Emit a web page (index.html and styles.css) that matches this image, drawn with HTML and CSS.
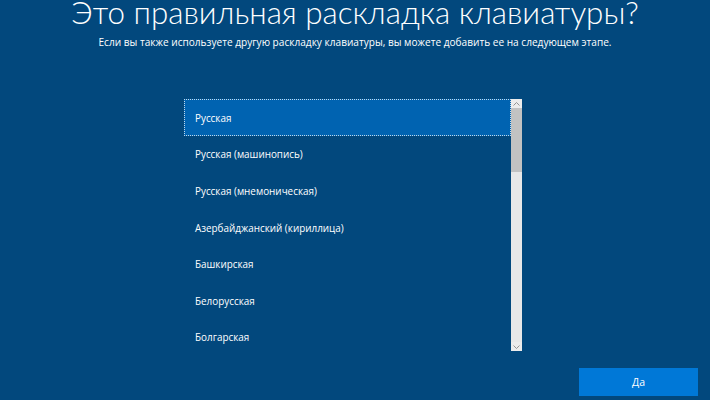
FILE: index.html
```html
<!DOCTYPE html>
<html lang="ru">
<head>
<meta charset="utf-8">
<link rel="stylesheet" href="styles.css">
</head>
<body>
<div class="page">
  <h1 class="title">Это правильная раскладка клавиатуры?</h1>
  <p class="subtitle">Если вы также используете другую раскладку клавиатуры, вы можете добавить ее на следующем этапе.</p>
  <div class="listbox">
    <ul class="items">
      <li class="item selected">Русская</li>
      <li class="item">Русская (машинопись)</li>
      <li class="item">Русская (мнемоническая)</li>
      <li class="item">Азербайджанский (кириллица)</li>
      <li class="item">Башкирская</li>
      <li class="item">Белорусская</li>
      <li class="item">Болгарская</li>
    </ul>
    <div class="scrollbar">
      <div class="arrow up"><svg width="7" height="4" viewBox="0 0 7 4"><path d="M0.5 3.5 L3.5 0.5 L6.5 3.5" fill="none" stroke="#8a8a8a" stroke-width="0.9"/></svg></div>
      <div class="track"><div class="thumb"></div></div>
      <div class="arrow down"><svg width="7" height="4" viewBox="0 0 7 4"><path d="M0.5 0.5 L3.5 3.5 L6.5 0.5" fill="none" stroke="#8a8a8a" stroke-width="0.9"/></svg></div>
    </div>
  </div>
  <div class="footer">
    <button class="btn">Да</button>
  </div>
</div>
</body>
</html>
```
FILE: styles.css
```css
html, body {
  margin: 0;
  padding: 0;
}
body {
  width: 710px;
  height: 400px;
  overflow: hidden;
  background: #02487d;
  color: #ffffff;
  font-family: "Open Sans", "Noto Sans", sans-serif;
}
.page {
  display: flex;
  flex-direction: column;
  align-items: center;
  height: 400px;
}
.title {
  margin: -10px 0 0 0;
  font-family: Lato, "Open Sans", sans-serif;
  font-weight: 300;
  font-size: 31.4px;
  line-height: 44px;
  white-space: nowrap;
}
.subtitle {
  margin: 1px 0 0 0;
  font-size: 10.1px;
  line-height: 14px;
  white-space: nowrap;
}
.listbox {
  margin-top: 50px;
  margin-right: 4px;
  width: 338px;
  height: 252px;
  display: flex;
  overflow: hidden;
}
.items {
  list-style: none;
  margin: 0;
  padding: 0;
  width: 327px;
}
.item {
  height: 36.6px;
  box-sizing: border-box;
  padding-left: 11px;
  padding-top: 1px;
  display: flex;
  align-items: center;
  font-size: 9.9px;
}
.item.selected {
  background: #0063b1;
  outline: 1px dotted rgba(255,255,255,0.75);
  outline-offset: -1px;
}
.scrollbar {
  width: 11px;
  display: flex;
  flex-direction: column;
  background: #e6e6e6;
}
.arrow {
  height: 9px;
  display: flex;
  align-items: center;
  justify-content: center;
  background: #ececec;
}
.track {
  flex: 1;
  background: #e8e8e8;
}
.thumb {
  height: 64px;
  background: #c2c2c2;
}
.footer {
  margin-top: auto;
  width: 100%;
  display: flex;
  justify-content: flex-end;
  padding-bottom: 4px;
}
.btn {
  width: 119px;
  height: 28px;
  margin-right: 12px;
  border: none;
  background: #0078d7;
  color: #ffffff;
  font-family: "Open Sans", "Noto Sans", sans-serif;
  font-size: 10.5px;
  padding: 0;
}
```
